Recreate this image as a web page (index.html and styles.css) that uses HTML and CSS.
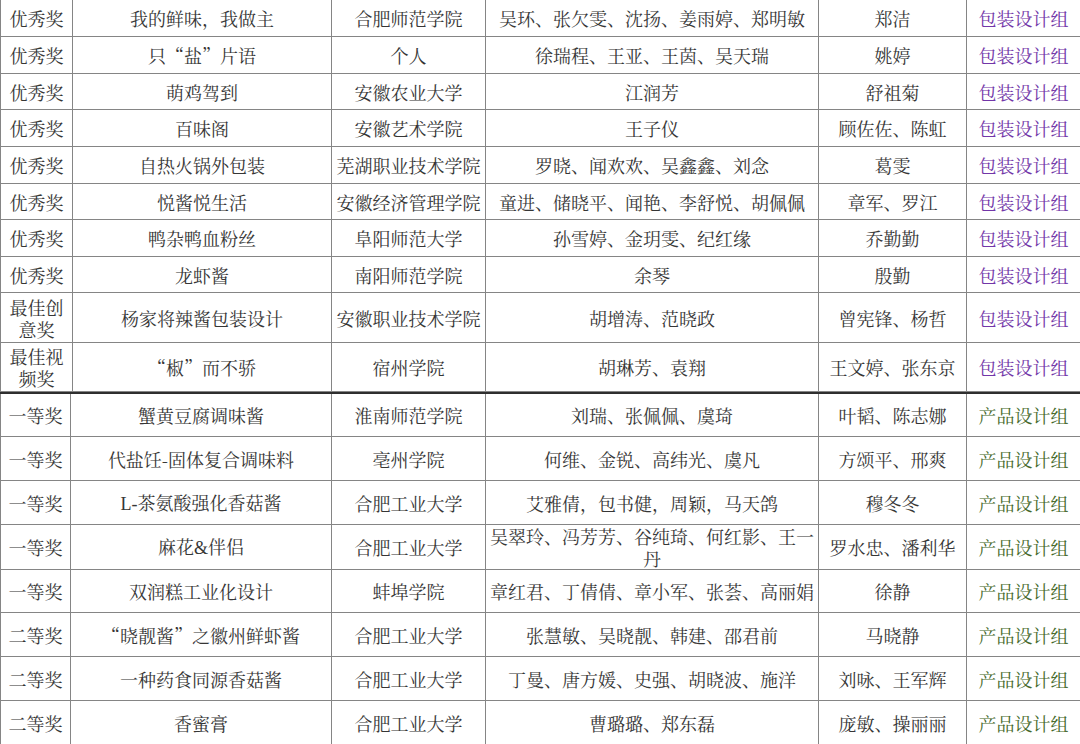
FILE: index.html
```html
<!DOCTYPE html>
<html lang="zh-CN">
<head>
<meta charset="utf-8">
<title>获奖名单</title>
<link rel="stylesheet" href="styles.css">
</head>
<body>
<table class="awards awards-top">
  <colgroup>
    <col class="c1"><col class="c2"><col class="c3"><col class="c4"><col class="c5"><col class="c6">
  </colgroup>
  <tbody>
    <tr class="r37"><td>优秀奖</td><td>我的鲜味，我做主</td><td>合肥师范学院</td><td>吴环、张欠雯、沈扬、姜雨婷、郑明敏</td><td>郑洁</td><td class="pkg">包装设计组</td></tr>
    <tr class="r37"><td>优秀奖</td><td>只<span class="q">“</span>盐<span class="q">”</span>片语</td><td>个人</td><td>徐瑞程、王亚、王茵、吴天瑞</td><td>姚婷</td><td class="pkg">包装设计组</td></tr>
    <tr class="r36"><td>优秀奖</td><td>萌鸡驾到</td><td>安徽农业大学</td><td>江润芳</td><td>舒祖菊</td><td class="pkg">包装设计组</td></tr>
    <tr class="r37"><td>优秀奖</td><td>百味阁</td><td>安徽艺术学院</td><td>王子仪</td><td>顾佐佐、陈虹</td><td class="pkg">包装设计组</td></tr>
    <tr class="r37"><td>优秀奖</td><td>自热火锅外包装</td><td>芜湖职业技术学院</td><td>罗晓、闻欢欢、吴鑫鑫、刘念</td><td>葛雯</td><td class="pkg">包装设计组</td></tr>
    <tr class="r36"><td>优秀奖</td><td>悦酱悦生活</td><td>安徽经济管理学院</td><td>童进、储晓平、闻艳、李舒悦、胡佩佩</td><td>章军、罗江</td><td class="pkg">包装设计组</td></tr>
    <tr class="r37"><td>优秀奖</td><td>鸭杂鸭血粉丝</td><td>阜阳师范大学</td><td>孙雪婷、金玥雯、纪红缘</td><td>乔勤勤</td><td class="pkg">包装设计组</td></tr>
    <tr class="r36"><td>优秀奖</td><td>龙虾酱</td><td>南阳师范学院</td><td>余琴</td><td>殷勤</td><td class="pkg">包装设计组</td></tr>
    <tr class="r50"><td>最佳创意奖</td><td>杨家将辣酱包装设计</td><td>安徽职业技术学院</td><td>胡增涛、范晓政</td><td>曾宪锋、杨哲</td><td class="pkg">包装设计组</td></tr>
    <tr class="r49"><td>最佳视频奖</td><td><span class="q">“</span>椒<span class="q">”</span>而不骄</td><td>宿州学院</td><td>胡琳芳、袁翔</td><td>王文婷、张东京</td><td class="pkg">包装设计组</td></tr>
  </tbody>
</table>
<table class="awards awards-bottom">
  <colgroup>
    <col class="d1"><col class="c2"><col class="c3"><col class="c4"><col class="c5"><col class="c6">
  </colgroup>
  <tbody>
    <tr class="r44 first"><td>一等奖</td><td>蟹黄豆腐调味酱</td><td>淮南师范学院</td><td>刘瑞、张佩佩、虞琦</td><td>叶韬、陈志娜</td><td class="prod">产品设计组</td></tr>
    <tr class="r44"><td>一等奖</td><td>代盐饪-固体复合调味料</td><td>亳州学院</td><td>何维、金锐、高纬光、虞凡</td><td>方颂平、邢爽</td><td class="prod">产品设计组</td></tr>
    <tr class="r44"><td>一等奖</td><td><span class="lat">L-</span>茶氨酸强化香菇酱</td><td>合肥工业大学</td><td>艾雅倩，包书健，周颖，马天鸽</td><td>穆冬冬</td><td class="prod">产品设计组</td></tr>
    <tr class="r44"><td>一等奖</td><td>麻花<span class="lat">&amp;</span>伴侣</td><td>合肥工业大学</td><td class="tight">吴翠玲、冯芳芳、谷纯琦、何红影、王一丹</td><td>罗水忠、潘利华</td><td class="prod">产品设计组</td></tr>
    <tr class="r43"><td>一等奖</td><td>双润糕工业化设计</td><td>蚌埠学院</td><td class="tight">章红君、丁倩倩、章小军、张荟、高丽娟</td><td>徐静</td><td class="prod">产品设计组</td></tr>
    <tr class="r44"><td>二等奖</td><td><span class="q">“</span>晓靓酱<span class="q">”</span>之徽州鲜虾酱</td><td>合肥工业大学</td><td>张慧敏、吴晓靓、韩建、邵君前</td><td>马晓静</td><td class="prod">产品设计组</td></tr>
    <tr class="r44"><td>二等奖</td><td>一种药食同源香菇酱</td><td>合肥工业大学</td><td>丁曼、唐方媛、史强、胡晓波、施洋</td><td>刘咏、王军辉</td><td class="prod">产品设计组</td></tr>
    <tr class="r44"><td>二等奖</td><td>香蜜膏</td><td>合肥工业大学</td><td>曹璐璐、郑东磊</td><td>庞敏、操丽丽</td><td class="prod">产品设计组</td></tr>
  </tbody>
</table>
</body>
</html>
```

FILE: styles.css
```css
html, body {
  margin: 0;
  padding: 0;
  background: #ffffff;
}

body {
  width: 1080px;
  height: 744px;
  overflow: hidden;
  font-family: "Noto Serif CJK SC", "Noto Sans CJK SC", "Liberation Serif", sans-serif;
  font-size: 18px;
  line-height: 22px;
  color: #363636;
}

.awards {
  width: 1081px;
  border-collapse: collapse;
  table-layout: fixed;
}

.awards-top {
  margin-top: -1px;
}

.awards td {
  border: 1px solid #858585;
  padding: 0 2px;
  text-align: center;
  vertical-align: middle;
  overflow: visible;
  word-break: break-all;
}

.awards td.tight {
  padding: 0;
}

.c1 { width: 72px; }
.d1 { width: 70px; }
.c2 { width: 259px; }
.c3 { width: 154px; }
.c4 { width: 333px; }
.c5 { width: 148px; }
.c6 { width: 114px; }
.awards-bottom .c2 { width: 261px; }

.r36 td { height: 35px; }
.r37 td { height: 36px; }
.r50 td { height: 49px; }
.r49 td { height: 48px; }
.r44 td { height: 43px; }
.r43 td { height: 42px; }

.awards-bottom tr.first td {
  height: 42px;
  border-top: 2px solid #2e2e2e;
}

.pkg {
  color: #7236a8;
}

.prod {
  color: #46692a;
}

.q {
  font-feature-settings: "fwid" 1;
}

.lat {
  font-family: "Liberation Serif", serif;
}
```
